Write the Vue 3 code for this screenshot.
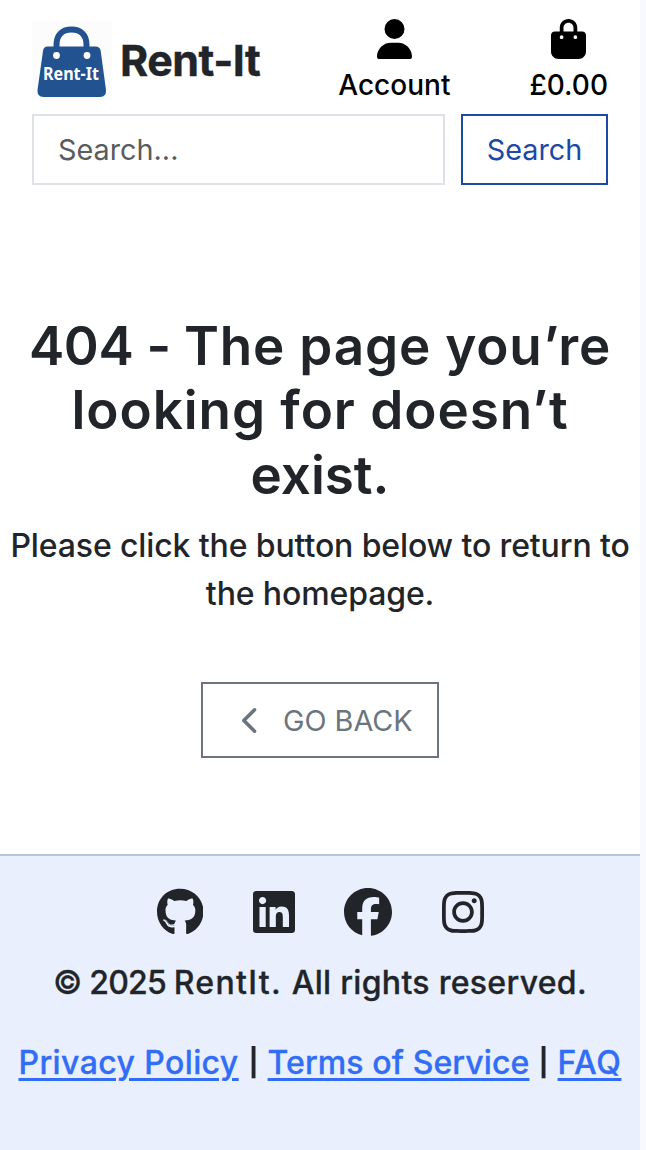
<script setup>
const socials = [
  { name: 'GitHub', w: 496, d: 'M165.9 397.4c0 2-2.3 3.6-5.2 3.6-3.3.3-5.6-1.3-5.6-3.6 0-2 2.3-3.6 5.2-3.6 3-.3 5.6 1.3 5.6 3.6zm-31.1-4.5c-.7 2 1.3 4.3 4.3 4.9 2.6 1 5.6 0 6.2-2s-1.3-4.3-4.3-5.2c-2.6-.7-5.5.3-6.2 2.3zm44.2-1.7c-2.9.7-4.9 2.6-4.6 4.9.3 2 2.9 3.3 5.9 2.6 2.9-.7 4.9-2.6 4.6-4.6-.3-1.9-3-3.2-5.9-2.9zM244.8 8C106.1 8 0 113.3 0 252c0 110.9 69.8 205.8 169.5 239.2 12.8 2.3 17.3-5.6 17.3-12.1 0-6.2-.3-40.4-.3-61.4 0 0-70 15-84.7-29.8 0 0-11.4-29.1-27.8-36.6 0 0-22.9-15.7 1.6-15.4 0 0 24.9 2 38.6 25.8 21.9 38.6 58.6 27.5 72.9 20.9 2.3-16 8.8-27.1 16-33.7-55.9-6.2-112.3-14.3-112.3-110.5 0-27.5 7.6-41.3 23.6-58.9-2.6-6.5-11.1-33.3 2.6-67.9 20.9-6.5 69 27 69 27 20-5.6 41.5-8.5 62.8-8.5s42.8 2.9 62.8 8.5c0 0 48.1-33.6 69-27 13.7 34.7 5.2 61.4 2.6 67.9 16 17.7 25.8 31.5 25.8 58.9 0 96.5-58.9 104.2-114.8 110.5 9.2 7.9 17 22.9 17 46.4 0 33.7-.3 75.4-.3 83.6 0 6.5 4.6 14.4 17.3 12.1C428.2 457.8 496 362.9 496 252 496 113.3 383.5 8 244.8 8zM97.2 352.9c-1.3 1-1 3.3.7 5.2 1.6 1.6 3.9 2.3 5.2 1 1.3-1 1-3.3-.7-5.2-1.6-1.6-3.9-2.3-5.2-1zm-10.8-8.1c-.7 1.3.3 2.9 2.3 3.9 1.6 1 3.6.7 4.3-.7.7-1.3-.3-2.9-2.3-3.9-2-.6-3.6-.3-4.3.7zm32.4 35.6c-1.6 1.3-1 4.3 1.3 6.2 2.3 2.3 5.2 2.6 6.5 1 1.3-1.3.7-4.3-1.3-6.2-2.2-2.3-5.2-2.6-6.5-1zm-11.4-14.7c-1.6 1-1.6 3.6 0 5.9 1.6 2.3 4.3 3.3 5.6 2.3 1.6-1.3 1.6-3.9 0-6.2-1.4-2.3-4-3.3-5.6-2z' },
  { name: 'LinkedIn', w: 448, d: 'M416 32H31.9C14.3 32 0 46.5 0 64.3v383.4C0 465.5 14.3 480 31.9 480H416c17.6 0 32-14.5 32-32.3V64.3c0-17.8-14.4-32.3-32-32.3zM135.4 416H69V202.2h66.5V416zm-33.2-243c-21.3 0-38.5-17.3-38.5-38.5S80.9 96 102.2 96c21.2 0 38.5 17.3 38.5 38.5 0 21.3-17.2 38.5-38.5 38.5zm282.1 243h-66.4V312c0-24.8-.5-56.7-34.5-56.7-34.6 0-39.9 27-39.9 54.9V416h-66.4V202.2h63.7v29.2h.9c8.9-16.8 30.6-34.5 62.9-34.5 67.2 0 79.7 44.3 79.7 101.9V416z' },
  { name: 'Facebook', w: 512, d: 'M512 256C512 114.6 397.4 0 256 0S0 114.6 0 256C0 376 82.7 476.8 194.2 504.5V334.2H141.4V256h52.8V222.3c0-87.1 39.4-127.5 125-127.5c16.2 0 44.2 3.2 55.7 6.4V172c-6-.6-16.5-1-29.6-1c-42 0-58.2 15.9-58.2 57.2V256h83.6l-14.4 78.2H287V510.1C413.8 494.8 512 386.9 512 256z' },
  { name: 'Instagram', w: 448, d: 'M224.1 141c-63.6 0-114.9 51.3-114.9 114.9s51.3 114.9 114.9 114.9S339 319.5 339 255.900 287.700 141 224.100 141zm0 189.600c-41.100 0-74.700-33.500-74.700-74.700s33.500-74.700 74.700-74.700 74.700 33.500 74.700 74.700-33.600 74.700-74.700 74.700zm146.400-194.300c0 14.900-12 26.800-26.800 26.800-14.900 0-26.800-12-26.800-26.800s12-26.800 26.800-26.800 26.800 12 26.800 26.800zm76.100 27.200c-1.700-35.900-9.900-67.700-36.200-93.900-26.200-26.200-58-34.400-93.900-36.200-37-2.100-147.900-2.100-184.900 0-35.800 1.700-67.600 9.900-93.900 36.100s-34.400 58-36.200 93.900c-2.100 37-2.100 147.900 0 184.900 1.700 35.900 9.900 67.700 36.200 93.900s58 34.400 93.900 36.200c37 2.100 147.900 2.100 184.900 0 35.900-1.700 67.700-9.900 93.900-36.200 26.200-26.200 34.400-58 36.200-93.900 2.100-37 2.100-147.800 0-184.800zM398.800 388c-7.800 19.600-22.900 34.700-42.600 42.600-29.500 11.700-99.500 9-132.100 9s-102.700 2.600-132.100-9c-19.600-7.800-34.700-22.900-42.600-42.600-11.700-29.500-9-99.500-9-132.100s-2.600-102.700 9-132.100c7.800-19.600 22.900-34.700 42.600-42.600 29.500-11.700 99.500-9 132.100-9s102.700-2.600 132.100 9c19.600 7.800 34.700 22.900 42.600 42.600 11.700 29.500 9 99.500 9 132.100s2.700 102.700-9 132.100z' },
]
</script>

<template>
  <div class="page">
    <header>
      <div class="top">
        <a class="brand">
          <svg class="logo" viewBox="0 0 80 80">
            <rect width="80" height="80" fill="#fcfcfc" />
            <path d="M24.500 27V24C24.500 13 31 8.500 39.500 8.500S54.500 13 54.500 24v3" fill="none" stroke="#22528f" stroke-width="6" />
            <path d="M15.500 25.500H63.500Q68 25.500 68.700 30L74 69Q74.500 76 68 76H11.500Q5 76 5.500 69L11 30Q11.500 25.500 15.500 25.500Z" fill="#22528f" />
            <circle cx="24.500" cy="34.500" r="3.400" fill="#fff" />
            <circle cx="55" cy="34.500" r="3.400" fill="#fff" />
            <text x="11" y="58.700" textLength="56" lengthAdjust="spacingAndGlyphs">Rent-It</text>
          </svg>
          <span class="name">Rent-It</span>
        </a>
        <a class="tool account">
          <svg viewBox="0 0 448 512"><path d="M224 256A128 128 0 1 0 224 0a128 128 0 1 0 0 256zm-45.700 48C79.800 304 0 383.800 0 482.300C0 498.700 13.300 512 29.700 512H418.300c16.400 0 29.700-13.300 29.700-29.700C448 383.800 368.200 304 269.700 304H178.300z" /></svg>
          <span>Account</span>
        </a>
        <a class="tool">
          <svg viewBox="0 0 448 512"><path d="M160 112c0-35.300 28.700-64 64-64s64 28.700 64 64v48H160V112zm-48 48H48c-26.500 0-48 21.500-48 48V416c0 53 43 96 96 96H352c53 0 96-43 96-96V208c0-26.500-21.500-48-48-48H336V112C336 50.100 285.900 0 224 0S112 50.100 112 112v48zm24 48a24 24 0 1 1 0 48 24 24 0 1 1 0-48zm152 24a24 24 0 1 1 48 0 24 24 0 1 1 -48 0z" /></svg>
          <span>£0.00</span>
        </a>
      </div>
      <form class="search" @submit.prevent>
        <input type="text" placeholder="Search..." />
        <button>Search</button>
      </form>
    </header>

    <main>
      <h1>
        <span class="l1"><b>404 - </b>The page you’re</span>
        <span class="l2">looking for doesn’t</span>
        <span class="l3">exist.</span>
      </h1>
      <p>Please click the button below to return to<br />the homepage.</p>
      <a class="back">
        <svg viewBox="0 0 320 512"><path d="M9.400 233.400c-12.500 12.500-12.500 32.800 0 45.300l192 192c12.500 12.500 32.800 12.500 45.300 0s12.500-32.800 0-45.300L77.300 256 246.600 86.600c12.500-12.500 12.500-32.800 0-45.300s-32.800-12.500-45.300 0l-192 192z" /></svg>
        <span>GO BACK</span>
      </a>
    </main>

    <footer>
      <div class="socials">
        <svg v-for="s in socials" :key="s.name" :viewBox="`0 0 ${s.w} 512`" :aria-label="s.name"><path :d="s.d" /></svg>
      </div>
      <div class="copy"><span class="year">© 2025 </span><span class="owner">RentIt. </span>All rights reserved.</div>
      <nav>
        <a class="privacy">Privacy Policy</a><span class="bar">|</span><a class="terms">Terms of Service</a><span class="bar">|</span><a class="faq">FAQ</a>
      </nav>
    </footer>
  </div>
</template>

<style>
html, body { background: #f8f9ff; }
</style>

<style scoped>
* { box-sizing: border-box; }
.page { width: 640px; height: 1150px; overflow: hidden; display: flex; flex-direction: column; background: #fff; color: #212529; font-family: Inter, sans-serif; white-space: nowrap; }
header { padding: 19px 32px 0; }
.top { display: flex; height: 95px; align-items: flex-start; }
.brand { display: flex; height: 84px; align-items: center; margin-right: auto; }
.logo { width: 80px; height: 80px; }
.logo text { font: 700 18px "Noto Sans", sans-serif; fill: #fff; }
.name { margin: -2px 0 0 8px; font-size: 43px; font-weight: 700; letter-spacing: -.5px; -webkit-text-stroke: .4px #212529; }
.tool { display: flex; flex-direction: column; align-items: center; color: #000; font-size: 28px; font-weight: 500; line-height: 42px; }
.tool svg { width: 35px; height: 40px; margin-bottom: 5px; }
.account { margin-right: 79px; }
.search { display: flex; gap: 16px; height: 71px; }
input { flex: 1; min-width: 0; border: 2px solid #dee2e6; border-radius: 0; padding: 0 24px; font: 400 28.800px Inter, sans-serif; }
input::placeholder { color: #595c5f; opacity: 1; }
button { width: 147px; border: 2px solid #1e48a8; background: #fff; color: #1e48a8; font: 400 28.800px Inter, sans-serif; padding: 0; }
main { flex: 0 0 669px; padding-top: 129px; display: flex; flex-direction: column; align-items: center; }
h1 { margin: 0 0 15px; font-size: 53px; line-height: 64.4px; font-weight: 600; text-align: center; }
h1 span { display: block; }
h1 b { font-weight: 600; letter-spacing: -.3px; }
.l1 { letter-spacing: .8px; }
.l2 { letter-spacing: .95px; }
p { margin: 0; font-size: 32px; line-height: 48px; font-weight: 500; text-align: center; letter-spacing: -.12px; }
.back { margin-top: 64px; width: 238px; height: 76px; border: 2px solid #6c757d; color: #6c757d; display: flex; align-items: center; font-size: 28.800px; padding-left: 39px; }
.back svg { width: 18px; height: 29px; margin-right: 23px; fill: currentColor; }
footer { flex: 1; background: #e9effd; border-top: 2px solid #b5c4e3; text-align: center; }
.socials { display: flex; justify-content: center; gap: 49.500px; padding-top: 32px; height: 80px; }
.socials svg { height: 48px; fill: #212529; }
.copy { margin-top: 23px; height: 48px; font-size: 32px; line-height: 48px; font-weight: 550; letter-spacing: .3px; -webkit-text-stroke: .3px #212529; }
.year { letter-spacing: -.8px; }
.owner { letter-spacing: 1.350px; }
nav { margin-top: 32px; height: 48px; display: flex; justify-content: center; align-items: center; font-size: 32px; line-height: 48px; font-weight: 550; }
nav a { color: #316df6; text-decoration: underline; text-decoration-thickness: 3px; text-underline-offset: 4px; -webkit-text-stroke: .3px #316df6; }
.privacy { width: 221px; letter-spacing: .4px; text-align: left; }
.terms { width: 262px; letter-spacing: .1px; }
.faq { width: 64px; letter-spacing: .6px; }
.bar { width: 28px; font-size: 27px; font-weight: 700; text-align: center; }
</style>
